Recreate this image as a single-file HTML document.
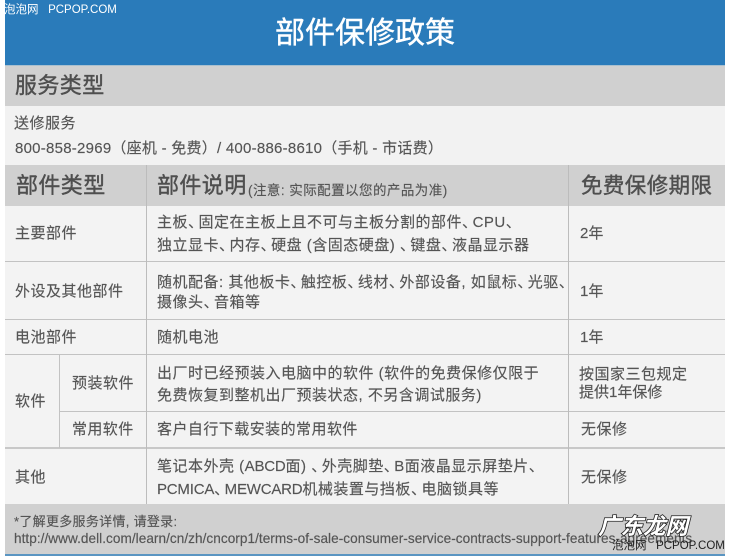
<!DOCTYPE html>
<html lang="zh"><head><meta charset="utf-8"><style>
html,body{margin:0;padding:0;background:#fff}
#p{position:relative;width:730px;height:556px;overflow:hidden;background:#fff;font-family:"Liberation Sans","Noto Sans CJK SC",sans-serif;color:#555}
.b{position:absolute}
.t{position:absolute;white-space:nowrap;line-height:24px;height:24px;font-size:15px;filter:blur(.35px);-webkit-text-stroke:.15px #555}
.r{letter-spacing:.5px}
.c{letter-spacing:-4.5px}
.l{letter-spacing:-.2px}
.h{font-size:22px;letter-spacing:.4px;color:#4f4f4f;-webkit-text-stroke:.4px #4f4f4f}
.w{font-size:11.5px}
</style></head><body><div id="p">
<div class="b" style="left:5px;top:0;width:720px;height:65px;background:#2a7bba"></div>
<div class="b" style="left:5px;top:65px;width:720px;height:41px;background:#d0d0d0;border-top:1px solid #a9c0cf;box-sizing:border-box"></div>
<div class="b" style="left:5px;top:106px;width:720px;height:59px;background:#f2f2f2"></div>
<div class="b" style="left:5px;top:165px;width:720px;height:41px;background:#d0d0d0"></div>
<div class="b" style="left:5px;top:206px;width:720px;height:298px;background:#f3f3f3"></div>
<div class="b" style="left:5px;top:504px;width:720px;height:50px;background:#d0d0d0"></div>
<div class="b" style="left:5px;top:554px;width:720px;height:2px;background:#5a95c2"></div>
<div class="b" style="left:5px;top:261px;width:720px;height:1px;background:#c2c2c2"></div>
<div class="b" style="left:5px;top:319px;width:720px;height:1px;background:#c2c2c2"></div>
<div class="b" style="left:5px;top:354px;width:720px;height:1px;background:#c2c2c2"></div>
<div class="b" style="left:59px;top:411px;width:666px;height:1px;background:#c2c2c2"></div>
<div class="b" style="left:5px;top:447px;width:720px;height:2px;background:#c8c8c8"></div>
<div class="b" style="left:146px;top:165px;width:1px;height:339px;background:#bcbcbc"></div>
<div class="b" style="left:568px;top:165px;width:1px;height:339px;background:#bcbcbc"></div>
<div class="b" style="left:59px;top:355px;width:1px;height:93px;background:#c2c2c2"></div>

<div class="t" style="left:275px;top:16px;height:36px;line-height:36px;font-size:30px;color:#fff;-webkit-text-stroke:.4px #fff">部件保修政策</div>
<div class="t h" style="left:15px;top:74px">服务类型</div>
<div class="t" style="left:14px;top:112px;letter-spacing:.5px">送修服务</div>
<div class="t" style="left:15px;top:137px;letter-spacing:.25px">800-858-2969（座机 - 免费）/ 400-886-8610（手机 - 市话费）</div>
<div class="t h" style="left:16px;top:174px">部件类型</div>
<div class="t h" style="left:157px;top:174px">部件说明</div>
<div class="t" style="left:248px;top:179px;font-size:13.5px;letter-spacing:.45px">(注意: 实际配置以您的产品为准)</div>
<div class="t h" style="left:581px;top:174px;font-size:21.5px">免费保修期限</div>

<div class="t r" style="left:15px;top:222px">主要部件</div>
<div class="t r" style="left:157px;top:211px">主板<span class="c">、</span>固定在主板上且不可与主板分割的部件<span class="c">、</span>CPU、</div>
<div class="t r" style="left:157px;top:234px">独立显卡<span class="c">、</span>内存<span class="c">、</span>硬盘 (含固态硬盘) <span class="c">、</span>键盘<span class="c">、</span>液晶显示器</div>
<div class="t" style="left:580px;top:222px">2年</div>

<div class="t r" style="left:15px;top:280px">外设及其他部件</div>
<div class="t r" style="left:157px;top:271px">随机配备: 其他板卡<span class="c">、</span>触控板<span class="c">、</span>线材<span class="c">、</span>外部设备, 如鼠标<span class="c">、</span>光驱、</div>
<div class="t r" style="left:157px;top:291px">摄像头<span class="c">、</span>音箱等</div>
<div class="t" style="left:580px;top:280px">1年</div>

<div class="t r" style="left:15px;top:326px">电池部件</div>
<div class="t r" style="left:157px;top:326px">随机电池</div>
<div class="t" style="left:580px;top:326px">1年</div>

<div class="t r" style="left:15px;top:390px">软件</div>
<div class="t r" style="left:72px;top:372px">预装软件</div>
<div class="t r" style="left:157px;top:362px">出厂时已经预装入电脑中的软件 (软件的免费保修仅限于</div>
<div class="t r" style="left:157px;top:384px">免费恢复到整机出厂预装状态, 不另含调试服务)</div>
<div class="t r" style="left:579px;top:363px">按国家三包规定</div>
<div class="t" style="left:579px;top:381px">提供1年保修</div>

<div class="t" style="left:72px;top:418px;letter-spacing:.4px">常用软件</div>
<div class="t" style="left:157px;top:418px;letter-spacing:.45px">客户自行下载安装的常用软件</div>
<div class="t r" style="left:581px;top:418px">无保修</div>

<div class="t r" style="left:15px;top:466px">其他</div>
<div class="t r" style="left:157px;top:455px">笔记本外壳 (<span class="l">ABCD</span>面) <span class="c">、</span>外壳脚垫<span class="c">、</span>B面液晶显示屏垫片、</div>
<div class="t r" style="left:157px;top:478px"><span class="l">PCMICA</span><span class="c">、</span><span class="l">MEWCARD</span>机械装置与挡板<span class="c">、</span>电脑锁具等</div>
<div class="t r" style="left:581px;top:466px">无保修</div>

<div class="t" style="left:14px;top:510px;font-size:13px;letter-spacing:.3px">*了解更多服务详情, 请登录:</div>
<div class="t" style="left:14px;top:527px;font-size:13.6px;letter-spacing:.04px">http://www.dell.com/learn/cn/zh/cncorp1/terms-of-sale-consumer-service-contracts-support-features-agreements</div>

<div class="t w" style="left:4px;top:-2px;color:#fff;-webkit-text-stroke:0;filter:none">泡泡网&nbsp;&nbsp; PCPOP.COM</div>
<div class="t" style="left:598px;top:512px;height:30px;line-height:30px;font-size:22.5px;color:#fff;font-style:italic;font-weight:bold;-webkit-text-stroke:1.6px #222;paint-order:stroke fill;filter:none">广东龙网</div>
<div class="t w" style="left:612px;top:534px;color:#222;-webkit-text-stroke:0;filter:none">泡泡网&nbsp;&nbsp; PCPOP.COM</div>
</div></body></html>
